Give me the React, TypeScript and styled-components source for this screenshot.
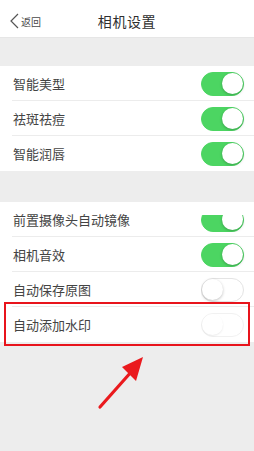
import React from "react";
import styled, { createGlobalStyle } from "styled-components";

const Global = createGlobalStyle`
  html, body { margin: 0; padding: 0; background: #ededed; }
  body { font-family: "Noto Sans CJK SC", "Noto Sans", sans-serif; }
`;

const Page = styled.div`
  position: relative;
  width: 254px;
  height: 451px;
  background: #ededed;
  overflow: hidden;
`;

const Header = styled.div`
  height: 38px;
  background: #fff;
  display: flex;
  align-items: center;
  justify-content: center;
  position: relative;
  padding-top: 4px;
  border-bottom: 1px solid #e6e6e6;
  box-sizing: border-box;
`;

const Back = styled.div`
  position: absolute;
  left: 9px;
  top: 13px;
  display: flex;
  align-items: center;
  gap: 1px;
  font-size: 10px;
  color: #4a4a4a;
`;

const Title = styled.div`
  font-size: 14px;
  color: #2e2e2e;
  letter-spacing: 0.6px;
`;

const Spacer = styled.div<{ h: number }>`
  height: ${(p) => p.h}px;
`;

const Group = styled.div`
  background: #fff;
`;

const Row = styled.div<{ last?: boolean }>`
  height: 35px;
  display: flex;
  align-items: center;
  justify-content: space-between;
  padding: 0 9px 0 13px;
  position: relative;
  &::after {
    content: "";
    position: absolute;
    left: 12px;
    right: 0;
    bottom: 0;
    height: 1px;
    background: ${(p) => (p.last ? "transparent" : "#ececec")};
  }
`;

const Label = styled.span`
  font-size: 13px;
  color: #444;
`;

const ToggleClip = styled.div<{ clipTop?: number }>`
  width: 44px;
  height: 25px;
  overflow: hidden;
  display: flex;
  align-items: flex-end;
  clip-path: inset(${(p) => p.clipTop || 0}px 0 0 0);
`;

const Track = styled.div<{ on: boolean; faint?: boolean }>`
  width: 43px;
  height: 24px;
  border-radius: 12px;
  box-sizing: border-box;
  background: ${(p) => (p.on ? "#4cd562" : "#fff")};
  border: 1.5px solid ${(p) => (p.on ? "#4cd562" : p.faint ? "#f1f1f1" : "#e4e4e4")};
  position: relative;
`;

const Knob = styled.div<{ on: boolean; faint?: boolean }>`
  position: absolute;
  top: 0;
  ${(p) => (p.on ? "right: 0;" : "left: 0;")}
  width: 21px;
  height: 21px;
  border-radius: 50%;
  background: #fff;
  box-shadow: ${(p) =>
    p.faint ? "0 1px 2px rgba(0,0,0,0.08)" : "0 1px 3px rgba(0,0,0,0.25)"};
`;

const Toggle = ({ on, faint, clipTop }: { on: boolean; faint?: boolean; clipTop?: number }) => (
  <ToggleClip clipTop={clipTop}>
    <Track on={on} faint={faint}>
      <Knob on={on} faint={faint} />
    </Track>
  </ToggleClip>
);

const Highlight = styled.div`
  position: absolute;
  left: 4px;
  top: 302px;
  width: 246px;
  height: 44px;
  border: 2.5px solid #e8141c;
  box-sizing: border-box;
`;

const Arrow = styled.svg`
  position: absolute;
  left: 94px;
  top: 352px;
`;

export default function App() {
  const g1 = ["智能美型", "祛斑祛痘", "智能润唇"];
  return (
    <Page>
      <Global />
      <Header>
        <Back>
          <svg width="11" height="16" viewBox="0 0 11 16">
            <path d="M9 1 L2 8 L9 15" fill="none" stroke="#555" strokeWidth="1.2" />
          </svg>
          <span>返回</span>
        </Back>
        <Title>相机设置</Title>
      </Header>
      <Spacer h={28} />
      <Group>
        {g1.map((t, i) => (
          <Row key={t} last={i === g1.length - 1}>
            <Label>{t}</Label>
            <Toggle on />
          </Row>
        ))}
      </Group>
      <Spacer h={31} />
      <Group>
        <Row>
          <Label>前置摄像头自动镜像</Label>
          <Toggle on clipTop={8} />
        </Row>
        <Row>
          <Label>相机音效</Label>
          <Toggle on />
        </Row>
        <Row>
          <Label>自动保存原图</Label>
          <Toggle on={false} />
        </Row>
        <Row last>
          <Label>自动添加水印</Label>
          <Toggle on={false} faint />
        </Row>
      </Group>
      <Highlight />
      <Arrow width="60" height="62" viewBox="0 0 60 62">
        <line x1="6" y1="55" x2="38" y2="19" stroke="#ea1a1e" strokeWidth="3.2" strokeLinecap="round" />
        <polygon points="49,5 28,15 42,29" fill="#ea1a1e" />
      </Arrow>
    </Page>
  );
}
